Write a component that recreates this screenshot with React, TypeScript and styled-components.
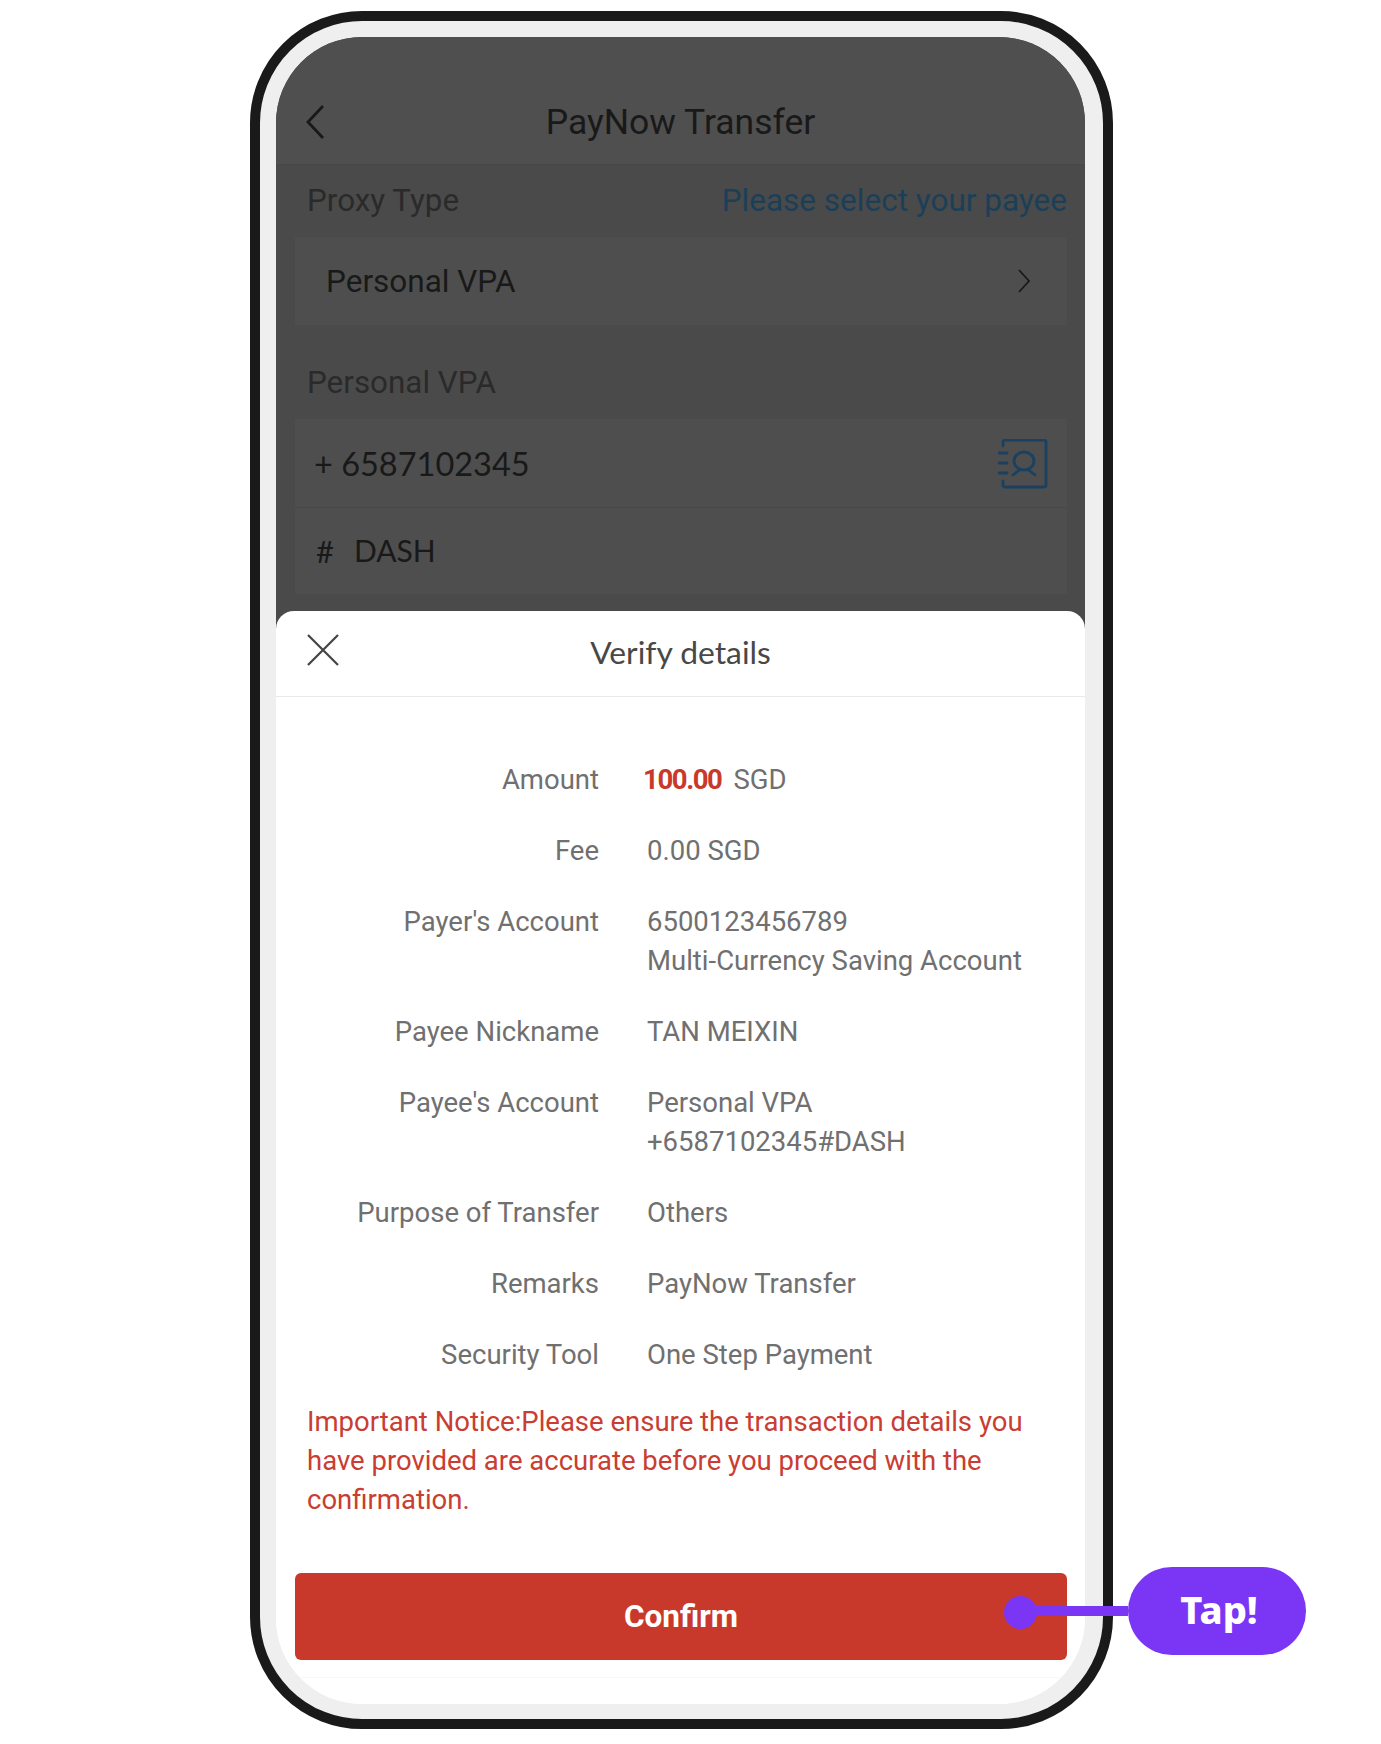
import React from 'react'
import styled, { createGlobalStyle } from 'styled-components'

const GlobalStyle = createGlobalStyle`
  html, body {
    margin: 0;
    padding: 0;
    background: #fff;
  }
  body {
    font-family: Roboto, "Liberation Sans", sans-serif;
  }
`

const Page = styled.div`
  position: relative;
  width: 1381px;
  height: 1744px;
  padding: 11px 0 0 250px;
  box-sizing: border-box;
`

const Phone = styled.div`
  width: 863px;
  height: 1718px;
  box-sizing: border-box;
  padding: 16px 18px 15px 16px;
  border: 10px solid #1a1a1a;
  border-radius: 112px;
  background: #efefef;
`

const Screen = styled.div`
  display: flex;
  flex-direction: column;
  height: 100%;
  border-radius: 86px;
  overflow: hidden;
  background: #fff;
`

const Backdrop = styled.div`
  height: 592px;
  flex: none;
  background: #4a4a4a;
  overflow: hidden;
`

const NavBar = styled.div`
  position: relative;
  display: flex;
  align-items: center;
  justify-content: center;
  height: 128px;
  padding-top: 42px;
  box-sizing: border-box;
  background: #4f4f4f;
  border-bottom: 1px solid #484848;
`

const BackIcon = styled.svg`
  position: absolute;
  left: 29px;
  top: 67px;
  width: 20px;
  height: 36px;
`

const NavTitle = styled.div`
  font-size: 35.5px;
  color: #191919;
  line-height: 44px;
`

const LabelRow = styled.div<{ $height: number; $shift: number }>`
  display: flex;
  align-items: center;
  justify-content: space-between;
  height: ${(p) => p.$height}px;
  box-sizing: border-box;
  padding: ${(p) => Math.max(p.$shift, 0)}px 18px ${(p) => Math.max(-p.$shift, 0)}px 31px;
`

const FieldLabel = styled.div`
  font-size: 31.4px;
  color: #2a2a2a;
`

const PayeeLink = styled.div`
  font-size: 31.5px;
  color: #1c3f58;
`

const FieldGroup = styled.div`
  margin: 0 18px 0 19px;
  background: #4e4e4e;
`

const FieldRow = styled.div<{ $divider?: boolean; $height: number; $inset: number }>`
  display: flex;
  align-items: center;
  justify-content: space-between;
  height: ${(p) => p.$height}px;
  padding: 0 19px 0 ${(p) => p.$inset}px;
  box-sizing: border-box;
  border-bottom: ${(p) => (p.$divider ? '1px solid #484848' : 'none')};
`

const SelectValue = styled.div`
  font-size: 31.5px;
  color: #191919;
`

const LatoValue = styled.div`
  display: flex;
  font-family: Lato, sans-serif;
  font-size: 32.5px;
  color: #191919;
`

const HashMark = styled.span`
  width: 38px;
  font-size: 31px;
`

const DashValue = styled.span`
  font-size: 30px;
`

const Chevron = styled.svg`
  width: 14px;
  height: 24px;
  margin-right: 17px;
`

const ContactIcon = styled.svg`
  width: 50px;
  height: 50px;
  margin-top: 1px;
`

const Sheet = styled.div`
  position: relative;
  display: flex;
  flex-direction: column;
  flex: 1;
  margin-top: -18px;
  border-radius: 18px 18px 0 0;
  background: #fff;
`

const SheetHeader = styled.div`
  position: relative;
  display: flex;
  align-items: center;
  justify-content: center;
  height: 86px;
  padding-bottom: 3px;
  box-sizing: border-box;
  flex: none;
  border-bottom: 1px solid #e8e8e8;
`

const CloseIcon = styled.svg`
  position: absolute;
  left: 30px;
  top: 22px;
  width: 34px;
  height: 34px;
`

const SheetTitle = styled.div`
  font-family: Lato, sans-serif;
  font-size: 31.8px;
  color: #484848;
`

const DetailList = styled.div`
  display: flex;
  flex-direction: column;
  gap: 32px;
  padding-top: 63px;
`

const DetailRow = styled.div`
  display: grid;
  grid-template-columns: 323px 1fr;
  column-gap: 48px;
  font-size: 27.5px;
  line-height: 39px;
  color: #707070;
`

const DetailLabel = styled.div`
  text-align: right;
`

const DetailValue = styled.div``

const AmountValue = styled.div`
  display: flex;
  gap: 12px;
  margin-left: -4px;
`

const Amount = styled.span`
  font-weight: 700;
  color: #c9392b;
  letter-spacing: -1.4px;
`

const Notice = styled.div`
  margin-top: 28px;
  padding: 0 40px 0 31px;
  font-size: 27.5px;
  line-height: 39px;
  color: #c93d32;
`

const ConfirmButton = styled.button`
  display: block;
  height: 87px;
  margin: 54px 18px 0 19px;
  flex: none;
  border: none;
  border-radius: 6px;
  background: #c9392b;
  color: #fff;
  font-family: Roboto, sans-serif;
  font-size: 31.5px;
  font-weight: 700;
`

const FooterRule = styled.div`
  margin-top: 17px;
  border-top: 1px solid #f8f8f8;
`

const Callout = styled.div`
  position: absolute;
  left: 1004px;
  top: 1567px;
  display: flex;
  align-items: center;
  height: 88px;
`

const TapDot = styled.div`
  width: 33px;
  height: 33px;
  margin-top: 2px;
  flex: none;
  border-radius: 50%;
  background: #7a35f5;
`

const TapLine = styled.div`
  width: 92px;
  height: 10px;
  margin-left: -1px;
  flex: none;
  background: #7a35f5;
`

const TapPill = styled.div`
  display: flex;
  align-items: center;
  justify-content: center;
  width: 178px;
  height: 88px;
  padding: 0 0 4px 4px;
  box-sizing: border-box;
  flex: none;
  border-radius: 44px;
  background: #7a35f5;
  color: #fff;
  font-family: "Noto Sans", sans-serif;
  font-size: 38px;
  font-weight: 800;
`

type Detail = { label: string; lines: string[] }

const details: Detail[] = [
  { label: 'Fee', lines: ['0.00 SGD'] },
  { label: "Payer's Account", lines: ['6500123456789', 'Multi-Currency Saving Account'] },
  { label: 'Payee Nickname', lines: ['TAN MEIXIN'] },
  { label: "Payee's Account", lines: ['Personal VPA', '+6587102345#DASH'] },
  { label: 'Purpose of Transfer', lines: ['Others'] },
  { label: 'Remarks', lines: ['PayNow Transfer'] },
  { label: 'Security Tool', lines: ['One Step Payment'] },
]

const App = () => {
  return (
    <Page>
      <GlobalStyle />
      <Phone>
        <Screen>
          <Backdrop>
            <NavBar>
              <BackIcon viewBox="0 0 20 36" fill="none" stroke="#191919" strokeWidth="2.8">
                <path d="M18 2 L3 18 L18 34" />
              </BackIcon>
              <NavTitle>PayNow Transfer</NavTitle>
            </NavBar>
            <LabelRow $height={72} $shift={-2}>
              <FieldLabel>Proxy Type</FieldLabel>
              <PayeeLink>Please select your payee</PayeeLink>
            </LabelRow>
            <FieldGroup>
              <FieldRow $height={88} $inset={31}>
                <SelectValue>Personal VPA</SelectValue>
                <Chevron viewBox="0 0 14 24" fill="none" stroke="#191919" strokeWidth="1.8">
                  <path d="M2 1 L12 12 L2 23" />
                </Chevron>
              </FieldRow>
            </FieldGroup>
            <LabelRow $height={94} $shift={20}>
              <FieldLabel>Personal VPA</FieldLabel>
            </LabelRow>
            <FieldGroup>
              <FieldRow $height={89} $divider $inset={19}>
                <LatoValue>+ 6587102345</LatoValue>
                <ContactIcon viewBox="0 0 50 50" fill="none" stroke="#1b4060" strokeWidth="2.8" strokeLinecap="round">
                  <path d="M5 7 V3 Q5 1 7 1 H46 Q48 1 48 3 V46 Q48 48 46 48 H7 Q5 48 5 46 V42" />
                  <path d="M1 14 H9 M1 24 H9 M1 34 H9" />
                  <ellipse cx="26" cy="22" rx="10" ry="9" />
                  <path d="M15 36 L22 30.5 M37 36 L30 30.5" />
                </ContactIcon>
              </FieldRow>
              <FieldRow $height={86} $inset={21}>
                <LatoValue>
                  <HashMark>#</HashMark>
                  <DashValue>DASH</DashValue>
                </LatoValue>
              </FieldRow>
            </FieldGroup>
          </Backdrop>
          <Sheet>
            <SheetHeader>
              <CloseIcon viewBox="0 0 34 34" fill="none" stroke="#444" strokeWidth="2.2">
                <path d="M2 2 L32 32 M32 2 L2 32" />
              </CloseIcon>
              <SheetTitle>Verify details</SheetTitle>
            </SheetHeader>
            <DetailList>
              <DetailRow>
                <DetailLabel>Amount</DetailLabel>
                <AmountValue>
                  <Amount>100.00</Amount>
                  <span>SGD</span>
                </AmountValue>
              </DetailRow>
              {details.map((item) => (
                <DetailRow key={item.label}>
                  <DetailLabel>{item.label}</DetailLabel>
                  <DetailValue>
                    {item.lines.map((line) => (
                      <div key={line}>{line}</div>
                    ))}
                  </DetailValue>
                </DetailRow>
              ))}
            </DetailList>
            <Notice>
              Important Notice:Please ensure the transaction details you have provided are accurate before you proceed with the confirmation.
            </Notice>
            <ConfirmButton>Confirm</ConfirmButton>
            <FooterRule />
          </Sheet>
        </Screen>
      </Phone>
      <Callout>
        <TapDot />
        <TapLine />
        <TapPill>Tap!</TapPill>
      </Callout>
    </Page>
  )
}

export default App
